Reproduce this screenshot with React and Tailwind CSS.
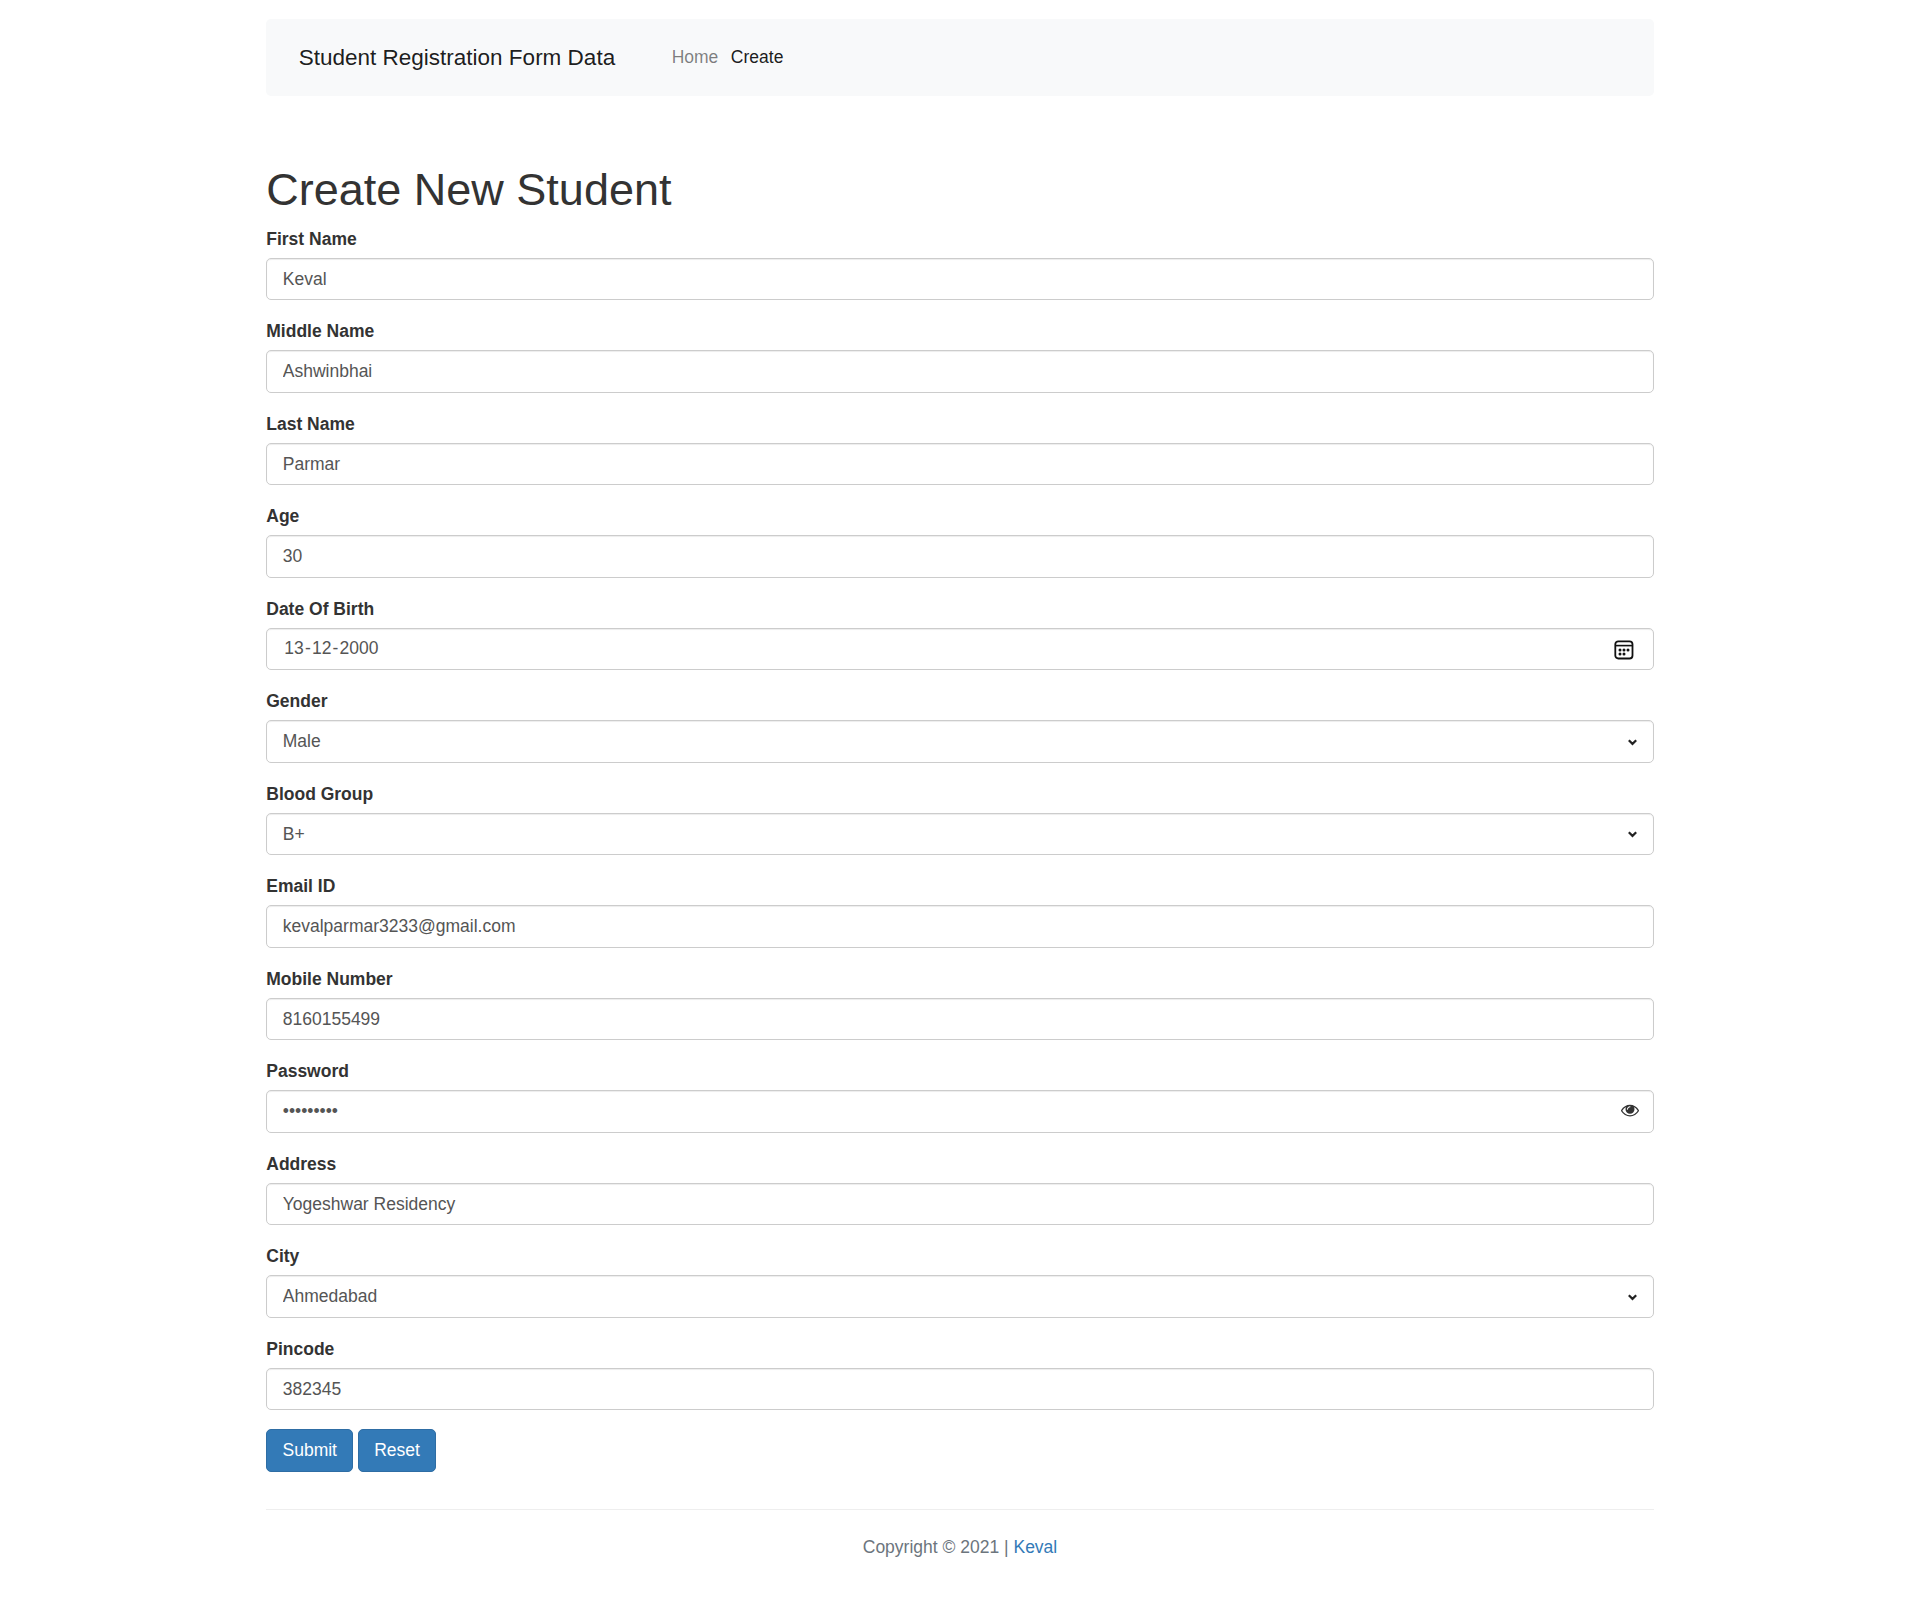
import React from "react";

const fields = [
  { label: "First Name", value: "Keval" },
  { label: "Middle Name", value: "Ashwinbhai" },
  { label: "Last Name", value: "Parmar" },
  { label: "Age", value: "30" },
  { label: "Date Of Birth", value: "13-12-2000", kind: "date" },
  { label: "Gender", value: "Male", kind: "select" },
  { label: "Blood Group", value: "B+", kind: "select" },
  { label: "Email ID", value: "kevalparmar3233@gmail.com" },
  { label: "Mobile Number", value: "8160155499" },
  { label: "Password", value: "keval1234", kind: "password" },
  { label: "Address", value: "Yogeshwar Residency" },
  { label: "City", value: "Ahmedabad", kind: "select" },
  { label: "Pincode", value: "382345" },
];

const control =
  "block h-[42.5px] w-full appearance-none rounded-[5px] border border-[#cccccc] bg-white px-[15.5px] pt-[7.5px] pb-[6.5px] text-[17.5px] leading-[25px] text-[#555555] shadow-[inset_0_1px_1px_rgba(0,0,0,0.075)] outline-none";

function CalendarIcon() {
  return (
    <svg className="absolute top-3 right-[19.5px] size-[20px]" viewBox="0 0 20 20" fill="none" stroke="#111">
      <rect x="1.3" y="1.3" width="17.2" height="17.2" rx="3" strokeWidth="1.8" />
      <path d="M1.2 5.6h17.2" strokeWidth="1.6" />
      <g fill="#111" stroke="none">
        <circle cx="6" cy="10" r="1.5" />
        <circle cx="10" cy="10" r="1.5" />
        <circle cx="14" cy="10" r="1.5" />
        <circle cx="6" cy="14" r="1.5" />
        <circle cx="10" cy="14" r="1.5" />
      </g>
    </svg>
  );
}

function ChevronIcon() {
  return (
    <svg className="pointer-events-none absolute top-[18.5px] right-[17px] h-[7px] w-[9px]" viewBox="0 0 9 7" fill="none" stroke="#222" strokeWidth="2.2">
      <path d="M0.8 1.2 4.5 4.9 8.2 1.2" />
    </svg>
  );
}

function EyeIcon() {
  return (
    <svg className="absolute top-[10.5px] right-[14.5px] size-[18px]" viewBox="0 0 1792 1792" fill="#333">
      <path d="M1664 960q-152-236-381-353 61 104 61 225 0 185-131.5 316.5t-316.5 131.5-316.5-131.5-131.5-316.5q0-121 61-225-229 117-381 353 133 205 333.5 326.5t434.5 121.5 434.5-121.5 333.5-326.5zm-720-384q0-20-14-34t-34-14q-125 0-214.5 89.5t-89.5 214.5q0 20 14 34t34 14 34-14 14-34q0-86 61-147t147-61q20 0 34-14t14-34zm848 384q0 34-20 69-140 230-376.5 368.5t-499.5 138.5-499.5-139-376.5-368q-20-35-20-69t20-69q140-229 376.5-368t499.5-139 499.5 139 376.5 368q20 35 20 69z" />
    </svg>
  );
}

function DateControl({ id, value }) {
  const [day, month, year] = value.split("-");
  return (
    <div id={id} tabIndex={0} className={control}>
      <span className="pl-[1.5px]">{day}</span>
      <span className="px-[1.2px]">-</span>
      <span>{month}</span>
      <span className="px-[1.2px]">-</span>
      <span>{year}</span>
    </div>
  );
}

function Control({ id, value, kind }) {
  if (kind === "date") return <DateControl id={id} value={value} />;
  if (kind === "select")
    return (
      <select id={id} className={control} defaultValue={value}>
        <option>{value}</option>
      </select>
    );
  return <input id={id} type={kind === "password" ? "password" : "text"} className={control} defaultValue={value} />;
}

function Field({ label, value, kind }) {
  const id = label.toLowerCase().replaceAll(" ", "-");
  return (
    <div className="mb-[18.75px]">
      <label htmlFor={id} className="mb-[5.75px] block pt-[0.5px] leading-[25px] font-bold">
        {label}
      </label>
      <div className="relative">
        <Control id={id} value={value} kind={kind} />
        {kind === "date" && <CalendarIcon />}
        {kind === "select" && <ChevronIcon />}
        {kind === "password" && <EyeIcon />}
      </div>
    </div>
  );
}

export default function App() {
  const button =
    "h-[43px] rounded-[5px] border border-[#2e6da4] bg-[#337ab7] px-[15.25px] text-[17.5px] leading-[25px] text-white";
  return (
    <div className="min-h-[1610px] bg-white font-['Liberation_Sans',Arial,sans-serif] text-[17.5px] leading-[25px] text-[#333333]">
      <div className="mx-auto w-[1387.5px] pt-[18.75px]">
        <nav className="flex h-[77.5px] items-center rounded-[5px] bg-[#f8f9fa] pl-[32.5px]">
          <a className="mr-[56.5px] pb-px text-[22.5px] text-black/90">Student Registration Form Data</a>
          <div className="flex gap-[12.5px]">
            <a className="text-black/50">Home</a>
            <a className="text-black/90">Create</a>
          </div>
        </nav>
        <h1 className="mt-[68.5px] mb-[11.5px] text-[45px] leading-[50px] font-medium">Create New Student</h1>
        <form>
          {fields.map((f) => (
            <Field key={f.label} {...f} />
          ))}
          <div className="flex gap-[4.75px]">
            <button type="button" className={button}>Submit</button>
            <button type="button" className={button}>Reset</button>
          </div>
        </form>
        <footer className="mt-[37px] border-t border-[#eeeeee] pt-[25px] text-center text-[#6c757d]">
          Copyright © 2021 | <a className="text-[#337ab7]">Keval</a>
        </footer>
      </div>
    </div>
  );
}
